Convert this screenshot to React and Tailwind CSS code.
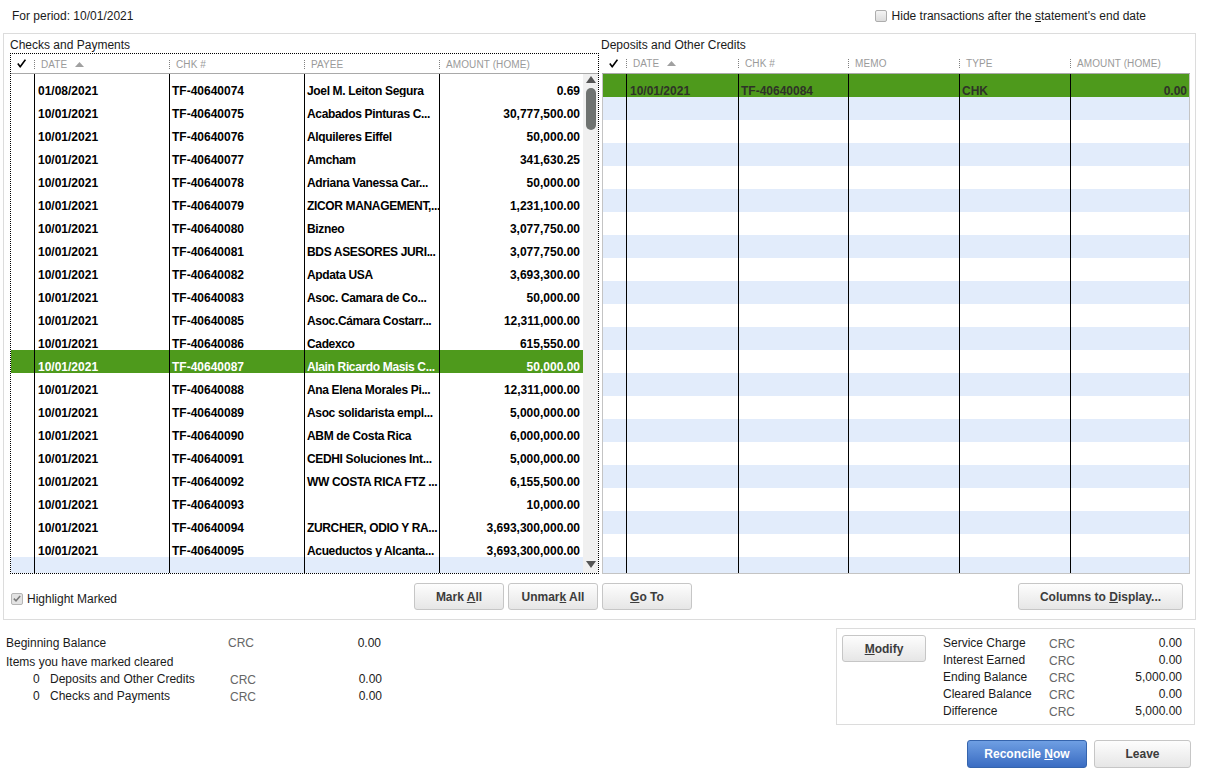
import React from "react";

const rows = [
  ["01/08/2021", "TF-40640074", "Joel M. Leiton Segura", "0.69"],
  ["10/01/2021", "TF-40640075", "Acabados Pinturas C...", "30,777,500.00"],
  ["10/01/2021", "TF-40640076", "Alquileres Eiffel", "50,000.00"],
  ["10/01/2021", "TF-40640077", "Amcham", "341,630.25"],
  ["10/01/2021", "TF-40640078", "Adriana Vanessa Car...", "50,000.00"],
  ["10/01/2021", "TF-40640079", "ZICOR MANAGEMENT,...", "1,231,100.00"],
  ["10/01/2021", "TF-40640080", "Bizneo", "3,077,750.00"],
  ["10/01/2021", "TF-40640081", "BDS ASESORES JURI...", "3,077,750.00"],
  ["10/01/2021", "TF-40640082", "Apdata USA", "3,693,300.00"],
  ["10/01/2021", "TF-40640083", "Asoc. Camara de Co...", "50,000.00"],
  ["10/01/2021", "TF-40640085", "Asoc.Cámara Costarr...", "12,311,000.00"],
  ["10/01/2021", "TF-40640086", "Cadexco", "615,550.00"],
  ["10/01/2021", "TF-40640087", "Alain Ricardo Masis C...", "50,000.00"],
  ["10/01/2021", "TF-40640088", "Ana Elena Morales Pi...", "12,311,000.00"],
  ["10/01/2021", "TF-40640089", "Asoc solidarista empl...", "5,000,000.00"],
  ["10/01/2021", "TF-40640090", "ABM de Costa Rica", "6,000,000.00"],
  ["10/01/2021", "TF-40640091", "CEDHI Soluciones Int...", "5,000,000.00"],
  ["10/01/2021", "TF-40640092", "WW COSTA RICA FTZ ...", "6,155,500.00"],
  ["10/01/2021", "TF-40640093", "", "10,000.00"],
  ["10/01/2021", "TF-40640094", "ZURCHER, ODIO Y RA...", "3,693,300,000.00"],
  ["10/01/2021", "TF-40640095", "Acueductos y Alcanta...", "3,693,300,000.00"],
];

function Check() {
  return (
    <svg width="9" height="9" viewBox="0 0 9 9">
      <path d="M0.8 4.6 L3.2 7.8 L8.4 0.6" fill="none" stroke="#000" strokeWidth="1.6" strokeLinejoin="round" />
    </svg>
  );
}

function SortUp() {
  return (
    <svg width="9" height="5" viewBox="0 0 9 5" className="ml-[8px]">
      <polygon points="4.5,0 9,5 0,5" fill="#a0a0a0" />
    </svg>
  );
}

function Sep() {
  return <span className="h-[9px] border-l border-dotted border-[#808080]" />;
}

function HeadLabel({ children, sort }) {
  return (
    <div className="flex items-center h-full pt-[1px]">
      <Sep />
      <span className="ml-[6px] text-[10px] text-[#9a9a9a] tracking-[0.1px]">{children}</span>
      {sort ? <SortUp /> : null}
    </div>
  );
}

function Btn({ className, children }) {
  return (
    <div
      className={
        "h-[27px] flex items-center justify-center rounded-[3px] border border-[#c6c6c6] bg-linear-to-b from-[#fdfdfd] to-[#e6e6e6] font-bold text-[12px] text-[#3c3c3c] " +
        className
      }
    >
      {children}
    </div>
  );
}

const cellBase = "h-[23px] pt-[7px] leading-[20px] overflow-hidden whitespace-nowrap";

function LeftRow({ r, i }) {
  const sel = i === 12;
  const bg = r ? (sel ? "bg-[#4e9a1c] text-white" : "bg-white text-black") : "bg-[#e2ecfb]";
  return (
    <div className={"flex h-[23px] font-bold " + bg}>
      <div className="w-[24px] h-[23px] border-r border-black" />
      <div className={"w-[135px] border-r border-black pl-[3px] " + cellBase}>{r ? r[0] : ""}</div>
      <div className={"w-[135px] border-r border-black pl-[2px] " + cellBase}>{r ? r[1] : ""}</div>
      <div className={"w-[135px] border-r border-black pl-[2px] tracking-[-0.35px] " + cellBase}>{r ? r[2] : ""}</div>
      <div className={"w-[143px] text-right pr-[3px] " + cellBase}>{r ? r[3] : ""}</div>
    </div>
  );
}

function RightRow({ i }) {
  const first = i === 0;
  const bg = first ? "bg-[#4e9a1c] text-[#2f3328]" : i % 2 === 1 ? "bg-[#e2ecfb]" : "bg-white";
  return (
    <div className={"flex h-[23px] font-bold " + bg}>
      <div className="w-[24px] h-[23px] border-r border-black" />
      <div className={"w-[112px] border-r border-black pl-[3px] " + cellBase}>{first ? "10/01/2021" : ""}</div>
      <div className={"w-[110px] border-r border-black pl-[2px] " + cellBase}>{first ? "TF-40640084" : ""}</div>
      <div className={"w-[111px] border-r border-black pl-[2px] " + cellBase}></div>
      <div className={"w-[111px] border-r border-black pl-[2px] " + cellBase}>{first ? "CHK" : ""}</div>
      <div className={"w-[118px] text-right pr-[2px] " + cellBase}>{first ? "0.00" : ""}</div>
    </div>
  );
}

export default function App() {
  const leftRows = [...rows, null];
  const rightRows = Array.from({ length: 22 }, (_, i) => i);
  return (
    <div className="w-[1205px] h-[778px] bg-white overflow-hidden font-['Liberation_Sans',Arial,sans-serif] text-[12px] text-[#1a1a1a]">
      {/* top bar */}
      <div className="h-[33px] flex items-start pt-[9px] leading-[14px]">
        <div className="pl-[12px]">For period: 10/01/2021</div>
        <div className="ml-auto mr-[59px] flex items-center">
          <span className="w-[12px] h-[12px] rounded-[2px] border border-[#adadad] bg-linear-to-b from-[#f4f4f4] to-[#dcdcdc]" />
          <span className="ml-[5px]">
            Hide transactions after the <span className="underline">s</span>tatement's end date
          </span>
        </div>
      </div>

      {/* main panel */}
      <div className="ml-[3px] w-[1193px] border border-[#dcdcdc] pl-[6px] pr-[5px] pt-[3px] pb-[9px] flex gap-[3px]">
        {/* left column */}
        <div className="w-[589px] flex flex-col">
          <div className="h-[16px] leading-[16px]">Checks and Payments</div>
          <div className="w-[589px] border border-dotted border-black">
            <div className="h-[20px] flex border-b border-[#a9a9a9]">
              <div className="w-[23px] flex items-center pl-[6px]">
                <Check />
              </div>
              <div className="w-[135px]"><HeadLabel sort>DATE</HeadLabel></div>
              <div className="w-[135px]"><HeadLabel>CHK #</HeadLabel></div>
              <div className="w-[135px]"><HeadLabel>PAYEE</HeadLabel></div>
              <div className="w-[159px]"><HeadLabel>AMOUNT (HOME)</HeadLabel></div>
            </div>
            <div className="flex h-[499px]">
              <div className="w-[572px] h-[499px] overflow-hidden">
                {leftRows.map((r, i) => (
                  <LeftRow key={i} r={r} i={i} />
                ))}
              </div>
              <div className="w-[15px] h-[499px] bg-[#f0f0f0] flex flex-col items-center">
                <svg width="10" height="7" viewBox="0 0 10 7" className="mt-[2px]">
                  <polygon points="5,0 10,7 0,7" fill="#555" />
                </svg>
                <div className="mt-[5px] w-[10px] h-[42px] rounded-[5px] bg-[#6f7371]" />
                <div className="flex-1" />
                <svg width="10" height="7" viewBox="0 0 10 7" className="mb-[5px]">
                  <polygon points="0,0 10,0 5,7" fill="#555" />
                </svg>
              </div>
            </div>
          </div>
          <div className="mt-[9px] h-[27px] flex items-center">
            <div className="pl-[1px] flex items-center pt-[4px]">
              <span className="w-[12px] h-[12px] rounded-[2px] border border-[#b5b5b5] bg-[#e3e3e3] flex items-center justify-center">
                <svg width="8" height="7" viewBox="0 0 8 7">
                  <path d="M0.8 3.6 L3 5.8 L7.2 1" fill="none" stroke="#7a7a7a" strokeWidth="1.5" />
                </svg>
              </span>
              <span className="ml-[4px]">Highlight Marked</span>
            </div>
            <div className="ml-auto mr-[1px] flex gap-[4px]">
              <Btn className="w-[90px]">
                <span>Mark <span className="underline">A</span>ll</span>
              </Btn>
              <Btn className="w-[90px]">
                <span>Unmar<span className="underline">k</span> All</span>
              </Btn>
            </div>
          </div>
        </div>

        {/* right column */}
        <div className="w-[588px] flex flex-col">
          <div className="h-[16px] leading-[16px] -ml-[1px]">Deposits and Other Credits</div>
          <div className="w-[588px]">
            <div className="h-[21px] flex border-b border-[#a9a9a9]">
              <div className="w-[24px] flex items-center pl-[7px] pt-[1px]">
                <Check />
              </div>
              <div className="w-[112px]"><HeadLabel sort>DATE</HeadLabel></div>
              <div className="w-[110px]"><HeadLabel>CHK #</HeadLabel></div>
              <div className="w-[111px]"><HeadLabel>MEMO</HeadLabel></div>
              <div className="w-[111px]"><HeadLabel>TYPE</HeadLabel></div>
              <div className="w-[120px]"><HeadLabel>AMOUNT (HOME)</HeadLabel></div>
            </div>
            <div className="h-[500px] border-l border-r border-b border-[#c4c4c4] overflow-hidden">
              {rightRows.map((i) => (
                <RightRow key={i} i={i} />
              ))}
            </div>
          </div>
          <div className="mt-[9px] h-[27px] flex items-center">
            <Btn className="w-[90px]">
              <span><span className="underline">G</span>o To</span>
            </Btn>
            <Btn className="w-[165px] ml-auto mr-[7px]">
              <span>Columns to <span className="underline">D</span>isplay...</span>
            </Btn>
          </div>
        </div>
      </div>

      {/* bottom section */}
      <div className="flex items-start">
        <div className="pl-[6px] pt-[15px] text-[#1a1a1a]">
          <div className="h-[19px] leading-[17px] flex">
            <span className="w-[222px]">Beginning Balance</span>
            <span className="w-[100px] text-[#666]">CRC</span>
            <span className="w-[53px] text-right">0.00</span>
          </div>
          <div className="h-[17px] leading-[17px]">Items you have marked cleared</div>
          <div className="h-[17px] leading-[17px] flex">
            <span className="w-[27px]" />
            <span className="w-[17px]">0</span>
            <span className="w-[180px]">Deposits and Other Credits</span>
            <span className="w-[100px] text-[#666] translate-y-[1px]">CRC</span>
            <span className="w-[52px] text-right">0.00</span>
          </div>
          <div className="h-[17px] leading-[17px] flex">
            <span className="w-[27px]" />
            <span className="w-[17px]">0</span>
            <span className="w-[180px]">Checks and Payments</span>
            <span className="w-[100px] text-[#666] translate-y-[1px]">CRC</span>
            <span className="w-[52px] text-right">0.00</span>
          </div>
        </div>

        <div className="ml-auto mr-[10px] mt-[8px] w-[359px] h-[97px] border border-[#dcdcdc] flex pl-[5px] pt-[6px] pr-[12px]">
          <Btn className="w-[84px]">
            <span><span className="underline">M</span>odify</span>
          </Btn>
          <div className="ml-[17px] flex-1">
            {[
              ["Service Charge", "0.00"],
              ["Interest Earned", "0.00"],
              ["Ending Balance", "5,000.00"],
              ["Cleared Balance", "0.00"],
              ["Difference", "5,000.00"],
            ].map(([l, v]) => (
              <div key={l} className="h-[17px] leading-[17px] flex">
                <span className="w-[106px]">{l}</span>
                <span className="w-[60px] text-[#666] translate-y-[1px]">CRC</span>
                <span className="flex-1 text-right">{v}</span>
              </div>
            ))}
          </div>
        </div>
      </div>

      <div className="mt-[15px] flex justify-end pr-[14px] gap-[7px]">
        <div className="w-[120px] h-[28px] rounded-[3px] border border-[#3564ad] bg-linear-to-b from-[#6f9fe3] to-[#3a6cc2] flex items-center justify-center text-white font-bold text-[12px]">
          <span>Reconcile <span className="underline">N</span>ow</span>
        </div>
        <Btn className="w-[97px] h-[28px]">
          <span>Leave</span>
        </Btn>
      </div>
    </div>
  );
}
